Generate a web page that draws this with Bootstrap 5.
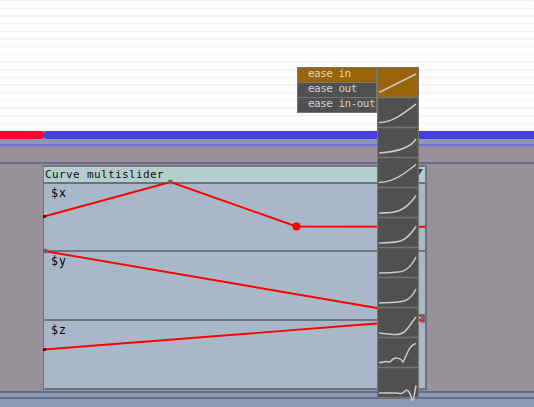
<!DOCTYPE html>
<html lang="en">
<head>
<meta charset="utf-8">
<meta name="viewport" content="width=device-width, initial-scale=1">
<title>Curve multislider</title>
<link href="https://cdn.jsdelivr.net/npm/bootstrap@5.3.0/dist/css/bootstrap.min.css" rel="stylesheet">
<style>
body{width:534px;height:407px;background:#8a9ab6;font-family:"DejaVu Sans Mono","Liberation Mono",monospace;line-height:1;color:#111}
svg{display:block}
.ruled{height:131px;background:repeating-linear-gradient(#f1f1f1 0,#f3f3f3 1.4px,#fdfdfd 1.5px,#fdfdfd 7.67px)}
.timeline{height:8px;background:#8a9ab6}
.clip-a{width:43.5px;background:#fc0336;border-radius:0 3px 3px 0}
.clip-b{background:#463fe0;border-radius:3px 0 0 3px}
.rail{height:7px;background:#8a9ab6;border-bottom:2px solid #6a71d8}
.workspace{height:245px;background:#989098}
.guide{height:18px;border-bottom:2px solid #6b6897}
.panel{width:384px;margin:1px 0 0 43px;height:224px}
.panel-title{height:17px;background:#b4cecd;border:2px solid #707779;border-left-width:1px;border-top-color:#77757b;border-bottom:0;font-size:11px;letter-spacing:.38px;padding-left:1px;white-space:pre}
.panel-title span{line-height:15px}
.lane{height:69px;background:#a8b8c8;border:1px solid #6c737a;border-top-width:2px;border-right-width:2px;border-bottom:0;padding:3px 0 0 7px;font-size:11.5px;line-height:13px;letter-spacing:1.1px;color:#000}
.panel-title + .lane{height:68px}
.lane:last-of-type{border-bottom:2px solid #6c737a;height:71px}
.curves{left:0;top:0;pointer-events:none}
.base-rule{height:8px;background:#8a9ab6;border-top:2px solid #6a6a7e;border-bottom:2px solid #636d84}
.ease-menu{left:297px;top:67px}
.ease-names{width:80px}
.ease-item{height:15px;border:1px solid #777;border-bottom:0;background:#505050;color:#d0d0d0;font-size:11px;line-height:12px;letter-spacing:-.53px;padding-left:10px;white-space:nowrap}
.ease-item:last-child{border-bottom:1px solid #777;height:16px}
.ease-item.active{background:#98650a;color:#ddd2bb}
</style>
<script src="https://cdn.jsdelivr.net/npm/bootstrap@5.3.0/dist/js/bootstrap.bundle.min.js"></script>
</head>
<body class="position-relative overflow-hidden m-0">
<main class="d-flex flex-column">
  <div class="ruled"></div>
  <div class="timeline d-flex"><div class="clip-a flex-shrink-0"></div><div class="clip-b flex-fill"></div></div>
  <div class="rail"></div>
  <section class="workspace">
    <div class="guide"></div>
    <div class="panel position-relative">
      <header class="panel-title d-flex justify-content-between"><span>Curve multislider</span>
        <svg width="10" height="10" viewBox="0 0 10 10"><path d="M0 2H8L4 8Z" fill="#35413f"/></svg>
      </header>
      <div class="lane">$x</div>
      <div class="lane">$y</div>
      <div class="lane">$z</div>
      <svg class="curves position-absolute" width="384" height="224" viewBox="43 165 384 224" fill="none">
        <g stroke="#f00" stroke-width="1.9"><path d="M44 216.500L170.500 182L296.500 226.500L426 226.800"/><path d="M44 251L377 308L424 316"/><path d="M44 349.500L377 323.500L424 320"/></g>
        <g stroke="#111"><path d="M43.500 215.500h2v2h-2zM43.500 348.500h2v2h-2z"/></g>
        <g stroke="#666b6e" stroke-width="1.300"><path d="M169 180.500h3v3h-3zM43.500 249.500h3v3h-3zM421.500 315h3v3h-3zM421.500 319h3v3h-3z"/></g>
        <circle cx="296.500" cy="226.500" r="4" fill="red"/>
      </svg>
    </div>
  </section>
  <div class="base-rule"></div>
</main>
<div class="ease-menu position-absolute d-flex align-items-start">
  <div class="ease-names">
    <div class="ease-item active">ease in</div>
    <div class="ease-item">ease out</div>
    <div class="ease-item">ease in-out</div>
  </div>
  <svg width="42" height="335" viewBox="377 67 42 335" fill="none">
    <rect x="377.500" y="67.500" width="41" height="330" fill="#505050"/>
    <rect x="377.500" y="67.500" width="41" height="30" fill="#98650a"/>
    <path d="M377.500 67.500H418.500V397.500H377.500ZM377.500 97.500h41M377.500 127.500h41M377.500 157.500h41M377.500 187.500h41M377.500 217.500h41M377.500 247.500h41M377.500 277.500h41M377.500 307.500h41M377.500 337.500h41M377.500 367.500h41" stroke="#74746f" stroke-width="1.300"/>
    <g stroke="#c9c9c9" stroke-width="1.500">
      <path d="M379 92.500L416 74"/>
      <path d="M379 122.500C392 122.500 403 114 416 104"/>
      <path d="M379 153C394 152 410 149 416 139"/>
      <path d="M379 182.500C392 182.500 403 175 416 164.500"/>
      <path d="M379 213C395 213 405 212 416 195.500"/>
      <path d="M379 243C400 242.500 405 243 416 226.500"/>
      <path d="M379 273C403 272.500 408 273 416 257"/>
      <path d="M379 303C404 302 409 303 416 289"/>
      <path d="M379 333C384 333.500 390 334.500 396 334.500C406 334.500 408 327 416 317"/>
      <path d="M379 362.500C383 363 383 361.500 386 361.500C388 361.500 389 363 391 361C394 357 400 357 403 362C407 355 409 345 416 343.500"/>
      <path d="M379 393H397C401 393 401 395 404 392C407 388 409 391 411 396Q412.500 404 414 397L416 385.500"/>
    </g>
  </svg>
</div>
</body>
</html>
